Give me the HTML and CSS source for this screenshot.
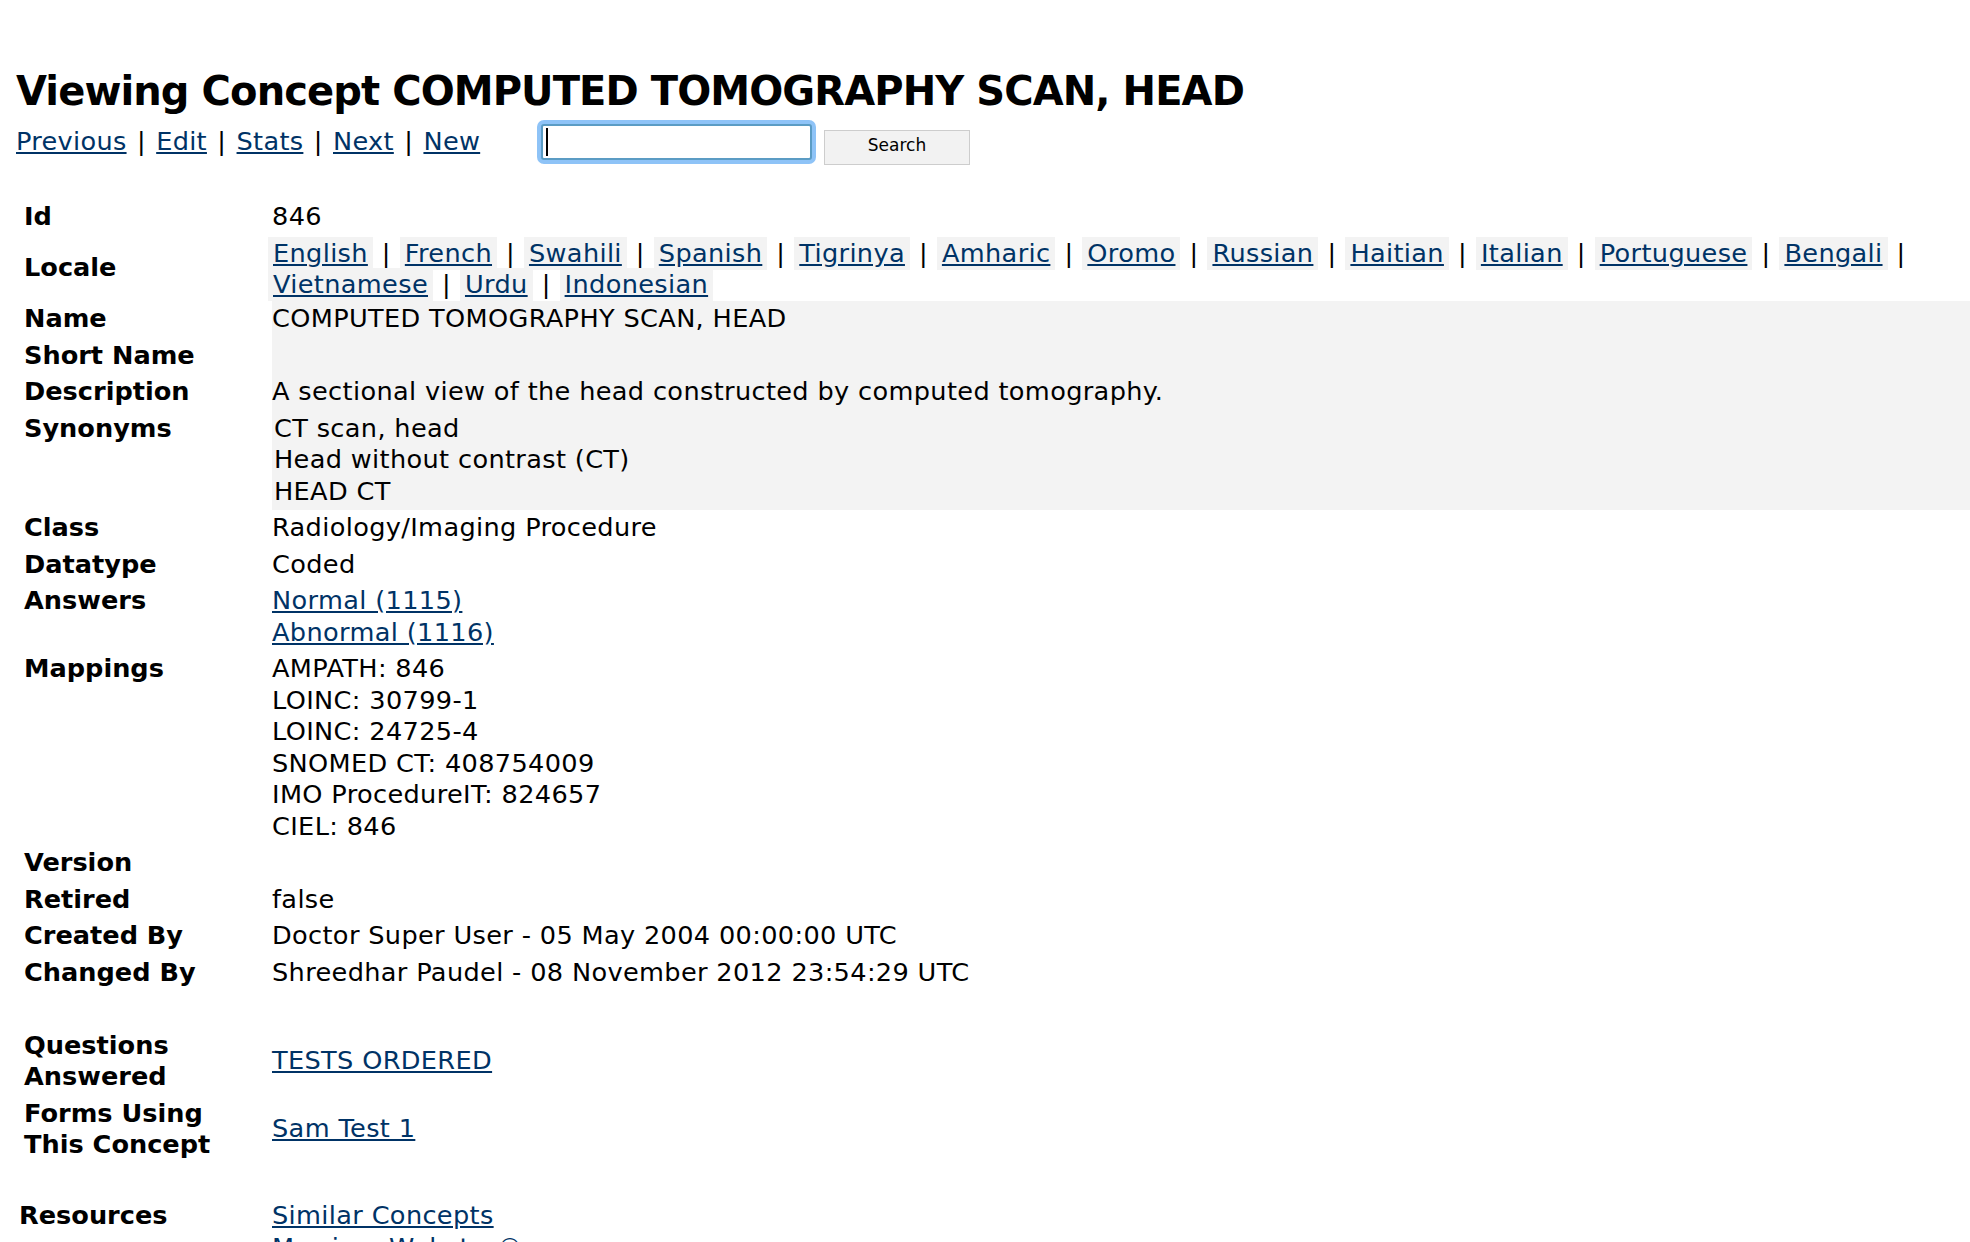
FILE: index.html
```html
<!DOCTYPE html>
<html lang="en">
<head>
<meta charset="utf-8">
<title>Viewing Concept</title>
<link rel="stylesheet" href="styles.css">
</head>
<body>
<div class="page">
  <h1 class="title">Viewing Concept COMPUTED TOMOGRAPHY SCAN, HEAD</h1>
  <div class="toolbar">
    <nav class="nav"><a href="#">Previous</a> | <a href="#">Edit</a> | <a href="#">Stats</a> | <a href="#">Next</a> | <a href="#">New</a></nav>
    <form class="search">
      <input class="search-input" type="text" aria-label="Search concepts">
      <button class="search-btn" type="button">Search</button>
    </form>
  </div>

  <div class="details">
    <div class="row"><div class="label">Id</div><div class="value">846</div></div>
    <div class="row">
      <div class="label">Locale</div>
      <div class="value locales">
        <div class="locale-line"><a class="locale" href="#">English</a> | <a class="locale" href="#">French</a> | <a class="locale" href="#">Swahili</a> | <a class="locale" href="#">Spanish</a> | <a class="locale" href="#">Tigrinya</a> | <a class="locale" href="#">Amharic</a> | <a class="locale" href="#">Oromo</a> | <a class="locale" href="#">Russian</a> | <a class="locale" href="#">Haitian</a> | <a class="locale" href="#">Italian</a> | <a class="locale" href="#">Portuguese</a> | <a class="locale" href="#">Bengali</a> |</div>
        <div class="locale-line"><a class="locale" href="#">Vietnamese</a> | <a class="locale" href="#">Urdu</a> | <a class="locale" href="#">Indonesian</a></div>
      </div>
    </div>
    <div class="row"><div class="label">Name</div><div class="value shaded">COMPUTED TOMOGRAPHY SCAN, HEAD</div></div>
    <div class="row"><div class="label">Short Name</div><div class="value shaded"></div></div>
    <div class="row"><div class="label">Description</div><div class="value shaded">A sectional view of the head constructed by computed tomography.</div></div>
    <div class="row">
      <div class="label top">Synonyms</div>
      <div class="value shaded list indent">
        <span>CT scan, head</span>
        <span>Head without contrast (CT)</span>
        <span>HEAD CT</span>
      </div>
    </div>
    <div class="row"><div class="label">Class</div><div class="value">Radiology/Imaging Procedure</div></div>
    <div class="row"><div class="label">Datatype</div><div class="value">Coded</div></div>
    <div class="row">
      <div class="label top">Answers</div>
      <div class="value list">
        <a href="#">Normal (1115)</a>
        <a href="#">Abnormal (1116)</a>
      </div>
    </div>
    <div class="row">
      <div class="label top">Mappings</div>
      <div class="value list">
        <span>AMPATH: 846</span>
        <span>LOINC: 30799-1</span>
        <span>LOINC: 24725-4</span>
        <span>SNOMED CT: 408754009</span>
        <span>IMO ProcedureIT: 824657</span>
        <span>CIEL: 846</span>
      </div>
    </div>
    <div class="row"><div class="label">Version</div><div class="value"></div></div>
    <div class="row"><div class="label">Retired</div><div class="value">false</div></div>
    <div class="row"><div class="label">Created By</div><div class="value">Doctor Super User - 05 May 2004 00:00:00 UTC</div></div>
    <div class="row"><div class="label">Changed By</div><div class="value">Shreedhar Paudel - 08 November 2012 23:54:29 UTC</div></div>
    <div class="row spacer"><div class="label"></div><div class="value"></div></div>
    <div class="row"><div class="label">Questions<br>Answered</div><div class="value"><a href="#">TESTS ORDERED</a></div></div>
    <div class="row"><div class="label">Forms Using<br>This Concept</div><div class="value"><a href="#">Sam Test 1</a></div></div>
  </div>

  <div class="resources">
    <div class="res-label">Resources</div>
    <div class="value list">
      <a href="#">Similar Concepts</a>
      <a href="#">Merriam Webster&reg;</a>
      <a href="#">Google</a>
      <a href="#">UpToDate&reg;</a>
    </div>
  </div>
</div>
</body>
</html>
```

FILE: styles.css
```css
html, body {
  margin: 0;
  padding: 0;
  background: #ffffff;
}

body {
  font-family: "DejaVu Sans", Verdana, sans-serif;
  font-size: 25.6px;
  line-height: 31.5px;
  color: #000000;
}

a {
  color: #003366;
  text-decoration: underline;
}

.page {
  padding: 0 0 40px 16px;
}

.title {
  margin: 67px 0 0 0;
  font-size: 40px;
  line-height: 48px;
  font-weight: bold;
  letter-spacing: -0.9px;
  white-space: nowrap;
}

.toolbar {
  display: flex;
  align-items: flex-start;
  margin-top: 9px;
}

.nav {
  width: 525px;
  flex: none;
  padding-top: 1.5px;
  white-space: nowrap;
  letter-spacing: 0.3px;
  word-spacing: 1.9px;
}

.search {
  display: flex;
  align-items: flex-start;
  margin: 0;
}

.search-input {
  box-sizing: border-box;
  width: 271px;
  height: 36px;
  margin: 0;
  padding: 0 6px;
  border: 2px solid #5b9cc4;
  border-radius: 3px;
  box-shadow: 0 0 0 4px #8ec3f7;
  outline: none;
  background: #ffffff linear-gradient(#000000, #000000) no-repeat 3px center / 2px 28px;
  font-family: "DejaVu Sans", Verdana, sans-serif;
  font-size: 20px;
}

.search-btn {
  box-sizing: border-box;
  width: 146px;
  height: 35px;
  margin: 6px 0 0 12px;
  padding: 0 0 5px 0;
  border: 1px solid #cdcdcd;
  border-radius: 0;
  background: #f2f2f2;
  color: #000000;
  font-family: "DejaVu Sans", Verdana, sans-serif;
  font-size: 17px;
}

.details {
  margin: 33px 0 0 8px;
}

.row {
  display: grid;
  grid-template-columns: 248px 1fr;
}

.label,
.value {
  display: flex;
  flex-direction: column;
  justify-content: center;
  padding: 2.5px 0;
  min-height: 31.5px;
}

.label {
  font-weight: bold;
}

.label.top {
  justify-content: flex-start;
}

.value {
  align-items: flex-start;
  white-space: nowrap;
  letter-spacing: 0.35px;
}

.value.indent {
  padding-left: 2px;
}

.shaded {
  background: #f3f3f3;
}

.list {
  justify-content: flex-start;
}

.value.locales {
  line-height: 31.5px;
  padding: 3px 0 0 0;
}

.locale-line {
  white-space: nowrap;
  word-spacing: 0.5px;
}

.locale {
  background: #f3f3f3;
  padding: 1px 5px 2px;
}

.locale-line .locale:first-child {
  margin-left: -4px;
}

.resources {
  display: grid;
  grid-template-columns: 253px 1fr;
  margin: 34.5px 0 0 3px;
}

.res-label {
  font-weight: bold;
  padding: 2.5px 0;
}

.resources .value {
  padding: 2.5px 0;
}
```
